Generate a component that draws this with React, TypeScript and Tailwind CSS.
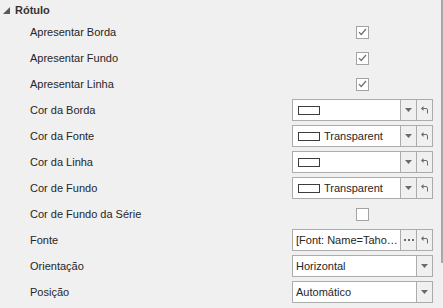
import React from 'react'

type Row =
  | { label: string; kind: 'check'; checked: boolean }
  | { label: string; kind: 'color'; text?: string }
  | { label: string; kind: 'font'; text: string }
  | { label: string; kind: 'select'; text: string }

const rows: Row[] = [
  { label: 'Apresentar Borda', kind: 'check', checked: true },
  { label: 'Apresentar Fundo', kind: 'check', checked: true },
  { label: 'Apresentar Linha', kind: 'check', checked: true },
  { label: 'Cor da Borda', kind: 'color' },
  { label: 'Cor da Fonte', kind: 'color', text: 'Transparent' },
  { label: 'Cor da Linha', kind: 'color' },
  { label: 'Cor de Fundo', kind: 'color', text: 'Transparent' },
  { label: 'Cor de Fundo da Série', kind: 'check', checked: false },
  { label: 'Fonte', kind: 'font', text: '[Font: Name=Taho…' },
  { label: 'Orientação', kind: 'select', text: 'Horizontal' },
  { label: 'Posição', kind: 'select', text: 'Automático' },
]

const Arrow = () => (
  <svg width="7" height="4" viewBox="0 0 7 4">
    <path d="M0 0h7L3.5 4z" fill="#6b6b6b" />
  </svg>
)

const Dots = () => (
  <svg width="10" height="2" viewBox="0 0 10 2">
    <rect x="0" y="0" width="2" height="2" fill="#6b6b6b" />
    <rect x="4" y="0" width="2" height="2" fill="#6b6b6b" />
    <rect x="8" y="0" width="2" height="2" fill="#6b6b6b" />
  </svg>
)

const Undo = () => (
  <svg width="8" height="8" viewBox="0 0 8 8">
    <path d="M1.5 2.5h3.5a1.5 1.5 0 0 1 1.5 1.5v3.5" fill="none" stroke="#6b6b6b" strokeWidth="1" />
    <path d="M0 2.5L2.5 0v5z" fill="#6b6b6b" />
  </svg>
)

const Check = ({ checked }: { checked: boolean }) => (
  <div className="w-[13px] h-[13px] border border-[#a3a3a3] bg-white flex items-center justify-center">
    {checked && (
      <svg width="9" height="8" viewBox="0 0 9 8">
        <path d="M1 4.2l2.2 2.3L8 1" fill="none" stroke="#6e6e6e" strokeWidth="1.2" />
      </svg>
    )}
  </div>
)

const Btn = ({ children }: { children: React.ReactNode }) => (
  <div className="w-[16px] h-full border-l border-[#acacac] flex items-center justify-center">{children}</div>
)

function Value({ row }: { row: Row }) {
  if (row.kind === 'check') {
    return (
      <div className="w-full flex justify-center">
        <Check checked={row.checked} />
      </div>
    )
  }
  return (
    <div className="w-full h-[22px] border border-[#acacac] flex bg-[#f0f0f0]">
      <div className="flex-1 bg-white flex items-center px-[4px] gap-[4px] overflow-hidden whitespace-nowrap">
        {row.kind === 'color' && (
          <>
            <div className="w-[22px] h-[9px] border border-[#3c3c3c] bg-white ml-[1px]" />
            {row.text && <span>{row.text}</span>}
          </>
        )}
        {row.kind !== 'color' && <span className="-ml-[1px]">{row.text}</span>}
      </div>
      {row.kind === 'font' ? (
        <Btn>
          <Dots />
        </Btn>
      ) : (
        <Btn>
          <Arrow />
        </Btn>
      )}
      {row.kind !== 'select' && (
        <Btn>
          <Undo />
        </Btn>
      )}
    </div>
  )
}

export default function App() {
  return (
    <div
      className="w-[443px] h-[308px] bg-[#f0f0f0] text-[11px] text-[#262626] flex overflow-hidden"
      style={{ fontFamily: '"Liberation Sans", Arial, sans-serif' }}
    >
      <div className="flex-1 flex flex-col">
        {/* Category header */}
        <div className="h-[19px] flex items-center shrink-0 pt-[1px]">
          <svg width="7" height="7" viewBox="0 0 7 7" className="ml-[3px] mt-[1px]">
            <path d="M7 0v7H0z" fill="#595959" />
          </svg>
          <span className="ml-[5px] font-bold text-[#333]">Rótulo</span>
        </div>

        {rows.map((row) => (
          <div key={row.label} className="h-[26px] flex items-center shrink-0">
            <div className="w-[292px] pl-[30px] shrink-0">{row.label}</div>
            <div className="w-[141px] flex items-center">
              <Value row={row} />
            </div>
          </div>
        ))}
      </div>
      {/* scrollbar line */}
      <div className="w-[2px] h-[263px] bg-[#a8a8a8] shrink-0" />
    </div>
  )
}
